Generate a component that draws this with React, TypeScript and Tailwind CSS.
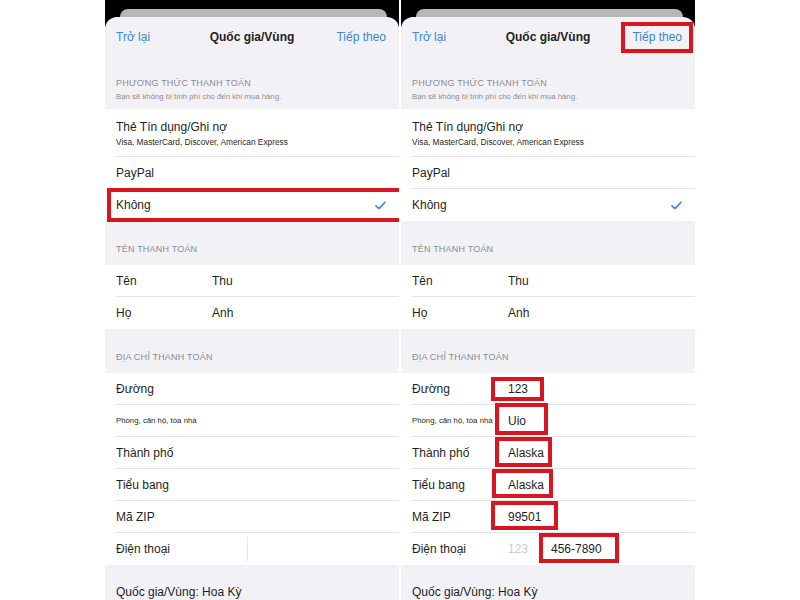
import React from "react";

type Field = { label: string; value?: string; small?: boolean };

const RED = "absolute border-[4px] border-[#d9161f] pointer-events-none";

const Check = () => (
    <svg width="11" height="9" viewBox="0 0 11 9" fill="none">
        <path d="M1 4.8 L4 7.6 L10 1.2" stroke="#3b86d8" strokeWidth="1.6" strokeLinecap="round" strokeLinejoin="round" />
    </svg>
);

const SectionHeader = ({ title }: { title: string }) => (
    <div className="h-[44px] shrink-0 flex items-end pb-[10px] pl-[11px]">
        <span className="text-[9px] leading-[12px] tracking-[0.2px] text-[#8c8c91]">{title}</span>
    </div>
);

const Row = ({ children, last }: { children: React.ReactNode; last?: boolean }) => (
    <div className="bg-white pl-[11px] shrink-0">
        <div className={last ? "h-[32px] flex items-center pr-[12px]" : "h-[32px] flex items-center pr-[12px] border-b border-[#e3e3e6]"}>
            {children}
        </div>
    </div>
);

const Phone = ({ filled }: { filled: boolean }) => {
    const address: Field[] = [
        { label: "Đường", value: filled ? "123" : "" },
        { label: "Phòng, căn hộ, tòa nhà", value: filled ? "Uio" : "", small: true },
        { label: "Thành phố", value: filled ? "Alaska" : "" },
        { label: "Tiểu bang", value: filled ? "Alaska" : "" },
        { label: "Mã ZIP", value: filled ? "99501" : "" },
    ];

    return (
        <div className="relative w-[294px] h-[600px] bg-black flex flex-col overflow-hidden">
            {/* card peeking behind the sheet */}
            <div className="h-[17px] shrink-0 pt-[9px] pl-[15px] pr-[12px]">
                <div className="h-[8px] rounded-t-[9px] bg-[#b7b7ba]" />
            </div>

            <div className="flex-1 shrink-0 bg-[#f2f2f6] rounded-t-[12px] flex flex-col text-[#1f1f22]">
                {/* nav */}
                <div className="h-[44px] shrink-0 flex items-center pl-[11px] pr-[13px] pb-[4px]">
                    <span className="w-[80px] text-[12px] text-[#3b86d8]">Trở lại</span>
                    <span className="flex-1 text-center text-[12px] font-bold text-[#222] pl-[2px]">Quốc gia/Vùng</span>
                    <span className="w-[80px] text-right text-[12px] text-[#3b86d8]">Tiếp theo</span>
                </div>

                {/* payment method */}
                <div className="h-[48px] shrink-0 pl-[11px] pt-[16px]">
                    <div className="text-[9px] leading-[12px] tracking-[0.2px] text-[#8c8c91]">PHƯƠNG THỨC THANH TOÁN</div>
                    <div className="text-[7.8px] leading-[10px] mt-[3px] text-[#8c8c91]">Bạn sẽ không bị tính phí cho đến khi mua hàng.</div>
                </div>
                <div className="bg-white pl-[11px] shrink-0">
                    <div className="h-[48px] pt-[11px] border-b border-[#e3e3e6]">
                        <div className="text-[12px] leading-[14px]">Thẻ Tín dụng/Ghi nợ</div>
                        <div className="text-[8.3px] leading-[11px] mt-[3px]">Visa, MasterCard, Discover, American Express</div>
                    </div>
                </div>
                <Row>
                    <span className="text-[12px]">PayPal</span>
                </Row>
                <Row last>
                    <span className="text-[12px] flex-1">Không</span>
                    <span className="mr-[1px]"><Check /></span>
                </Row>

                {/* billing name */}
                <SectionHeader title="TÊN THANH TOÁN" />
                <Row>
                    <span className="w-[96px] shrink-0 text-[12px]">Tên</span>
                    <span className="text-[12px]">Thu</span>
                </Row>
                <Row last>
                    <span className="w-[96px] shrink-0 text-[12px]">Họ</span>
                    <span className="text-[12px]">Anh</span>
                </Row>

                {/* billing address */}
                <SectionHeader title="ĐỊA CHỈ THANH TOÁN" />
                {address.map((f) => (
                    <Row key={f.label}>
                        <span
                            className={
                                f.small
                                    ? filled
                                        ? "w-[96px] shrink-0 text-[7.8px] whitespace-nowrap overflow-hidden pr-[11px]"
                                        : "w-[96px] shrink-0 text-[7.8px] whitespace-nowrap"
                                    : "w-[96px] shrink-0 text-[12px]"
                            }
                        >
                            {f.label}
                        </span>
                        <span className="text-[12px]">{f.value}</span>
                    </Row>
                ))}
                <Row last>
                    <span className="w-[96px] shrink-0 text-[12px]">Điện thoại</span>
                    {filled ? (
                        <>
                            <span className="w-[43px] text-[12px] text-[#c9c9ce]">123</span>
                            <span className="text-[12px]">456-7890</span>
                        </>
                    ) : (
                        <span className="ml-[35px] w-px h-[24px] bg-[#e6e6e8]" />
                    )}
                </Row>

                {/* footer */}
                <div className="pl-[11px] pt-[14px] shrink-0">
                    <span className="text-[12px]">Quốc gia/Vùng: Hoa Kỳ</span>
                </div>
            </div>

            {/* annotation boxes */}
            {!filled && <div className={`${RED} left-[2px] top-[188px] w-[296px] h-[34px]`} />}
            {filled && (
                <>
                    <div className={`${RED} left-[220px] top-[22px] w-[72px] h-[31px]`} />
                    <div className={`${RED} left-[90px] top-[377px] w-[53px] h-[24px]`} />
                    <div className={`${RED} left-[94px] top-[403px] w-[53px] h-[32px]`} />
                    <div className={`${RED} left-[94px] top-[437px] w-[57px] h-[30px]`} />
                    <div className={`${RED} left-[91px] top-[469px] w-[61px] h-[29px]`} />
                    <div className={`${RED} left-[90px] top-[501px] w-[67px] h-[29px]`} />
                    <div className={`${RED} left-[138px] top-[533px] w-[80px] h-[30px]`} />
                </>
            )}
        </div>
    );
};

const App = () => {
    return (
        <div
            className="w-[800px] h-[600px] bg-white flex justify-center gap-[2px] overflow-hidden"
            style={{ fontFamily: '"Liberation Sans", Arial, sans-serif' }}
        >
            <Phone filled={false} />
            <Phone filled={true} />
        </div>
    );
};

export default App;
